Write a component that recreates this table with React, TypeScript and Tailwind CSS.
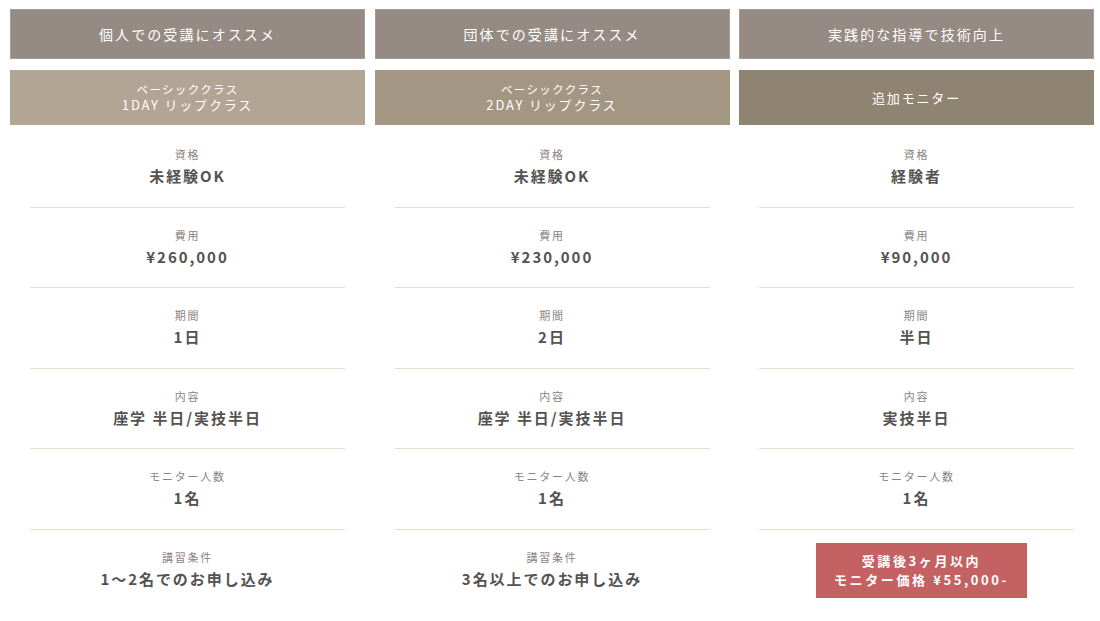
const font = { fontFamily: '"Noto Sans CJK JP", "Noto Sans", sans-serif' };

type Row = { label: string; value: string };

type Plan = {
  lead: string;
  title: string[];
  titleBg: string;
  rows: Row[];
  last: Row | null;
};

const plans: Plan[] = [
  {
    lead: '個人での受講にオススメ',
    title: ['ベーシッククラス', '1DAY リップクラス'],
    titleBg: 'bg-[#b2a593]',
    rows: [
      { label: '資格', value: '未経験OK' },
      { label: '費用', value: '¥260,000' },
      { label: '期間', value: '1日' },
      { label: '内容', value: '座学 半日/実技半日' },
      { label: 'モニター人数', value: '1名' },
    ],
    last: { label: '講習条件', value: '1〜2名でのお申し込み' },
  },
  {
    lead: '団体での受講にオススメ',
    title: ['ベーシッククラス', '2DAY リップクラス'],
    titleBg: 'bg-[#a39682]',
    rows: [
      { label: '資格', value: '未経験OK' },
      { label: '費用', value: '¥230,000' },
      { label: '期間', value: '2日' },
      { label: '内容', value: '座学 半日/実技半日' },
      { label: 'モニター人数', value: '1名' },
    ],
    last: { label: '講習条件', value: '3名以上でのお申し込み' },
  },
  {
    lead: '実践的な指導で技術向上',
    title: ['追加モニター'],
    titleBg: 'bg-[#8f8372]',
    rows: [
      { label: '資格', value: '経験者' },
      { label: '費用', value: '¥90,000' },
      { label: '期間', value: '半日' },
      { label: '内容', value: '実技半日' },
      { label: 'モニター人数', value: '1名' },
    ],
    last: null,
  },
];

function Item({ row }: { row: Row }) {
  return (
    <div className="h-[79.5px] flex flex-col items-center pt-[19px]">
      <p className="text-[11px] leading-[16px] tracking-[0.16em] text-[#8d847e]">{row.label}</p>
      <p className="mt-[3px] text-[15px] leading-[22px] font-bold tracking-[0.13em] text-[#555250]">{row.value}</p>
    </div>
  );
}

function Column({ plan }: { plan: Plan }) {
  return (
    <div className="w-[355px] flex flex-col">
      <div className="h-[50px] flex items-center justify-center bg-[#958a84] border border-[#a59c97] text-white text-[14px] tracking-[0.15em]">
        {plan.lead}
      </div>
      <div className={`mt-[11px] h-[55px] flex flex-col items-center justify-center text-white ${plan.titleBg}`}>
        {plan.title.length > 1 ? (
          <>
            <span className="text-[11.5px] leading-[15px] tracking-[0.12em]">{plan.title[0]}</span>
            <span className="text-[13px] leading-[16px] tracking-[0.14em]">{plan.title[1]}</span>
          </>
        ) : (
          <span className="text-[13px] tracking-[0.14em]">{plan.title[0]}</span>
        )}
      </div>
      <div className="px-[20px] pt-[2px]">
        {plan.rows.map((r) => (
          <div key={r.label} className="border-b border-[#e6dfcc]">
            <Item row={r} />
          </div>
        ))}
        {plan.last ? (
          <Item row={plan.last} />
        ) : (
          <div className="flex justify-center pt-[13px] pl-[10px]">
            <div className="w-[211px] h-[55px] bg-[#c46263] flex flex-col items-center justify-center text-white text-[13px] font-bold leading-[19px] tracking-[0.2em]">
              <span>受講後3ヶ月以内</span>
              <span>モニター価格 ¥55,000-</span>
            </div>
          </div>
        )}
      </div>
    </div>
  );
}

export default function App() {
  return (
    <div className="w-[1100px] h-[621px] bg-white overflow-hidden" style={font}>
      <div className="flex gap-[9.5px] pl-[10px] pt-[9px]">
        {plans.map((p) => (
          <Column key={p.lead} plan={p} />
        ))}
      </div>
    </div>
  );
}
